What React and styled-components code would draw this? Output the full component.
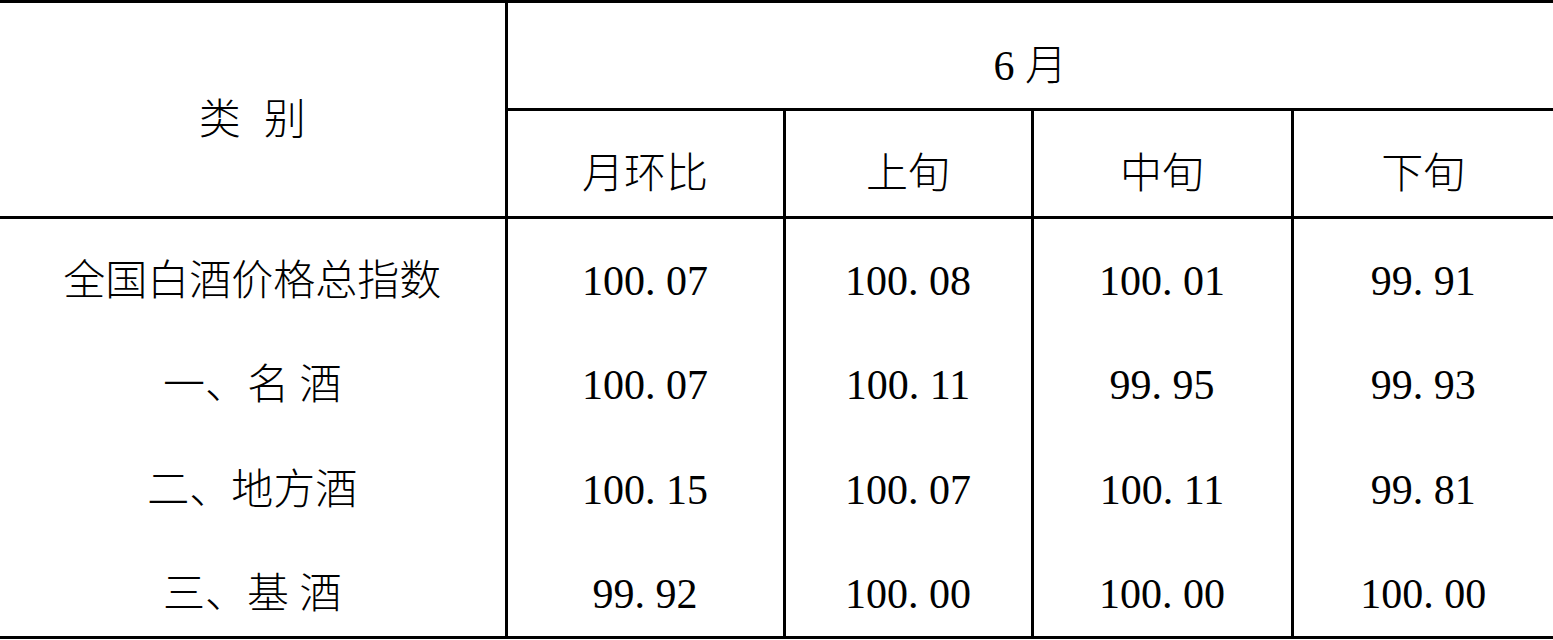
import React from "react";
import styled, { createGlobalStyle } from "styled-components";

const Global = createGlobalStyle`
  html, body { margin: 0; padding: 0; background: #ffffff; }
  body {
    font-family: "Liberation Serif", "Noto Sans CJK SC", serif;
    color: #000000;
  }
`;

const Table = styled.table`
  width: 1553px;
  table-layout: fixed;
  border-collapse: collapse;
  border-top: 3px solid #000;
  border-bottom: 3px solid #000;
  font-family: "Liberation Serif", "Noto Sans CJK SC", serif;
  font-size: 42px;
  font-weight: 300;
  color: #000;
`;

const HeadCell = styled.th`
  font-weight: 300;
  text-align: center;
  vertical-align: middle;
  height: ${(p) => p.$h || 105}px;
  padding: 20px 0 0 0;
  box-sizing: border-box;
  line-height: 1;
  border-left: ${(p) => (p.$first ? "none" : "3px solid #000")};
  border-bottom: 3px solid #000;
`;

const Cell = styled.td`
  text-align: center;
  vertical-align: middle;
  height: 105px;
  padding: 20px 0 0 0;
  box-sizing: border-box;
  line-height: 1;
  border-left: ${(p) => (p.$first ? "none" : "3px solid #000")};
`;

const Gap = styled.span`
  display: inline-block;
  width: ${(p) => p.$w}px;
`;

const Dot = styled.span`
  display: inline-block;
  width: 0.5em;
  text-align: left;
`;

const Num = ({ v }) => {
  const [a, b] = v.split(".");
  return (
    <span>
      {a}
      <Dot>.</Dot>
      {b}
    </span>
  );
};

const rows = [
  { label: "全国白酒价格总指数", vals: ["100.07", "100.08", "100.01", "99.91"] },
  { label: "一、名 酒", vals: ["100.07", "100.11", "99.95", "99.93"] },
  { label: "二、地方酒", vals: ["100.15", "100.07", "100.11", "99.81"] },
  { label: "三、基 酒", vals: ["99.92", "100.00", "100.00", "100.00"] },
];

export default function App() {
  return (
    <>
      <Global />
      <Table>
        <colgroup>
          <col style={{ width: 506 }} />
          <col style={{ width: 278 }} />
          <col style={{ width: 248 }} />
          <col style={{ width: 260 }} />
          <col style={{ width: 261 }} />
        </colgroup>
        <thead>
          <tr>
            <HeadCell $first rowSpan={2} $h={216}>
              类<Gap $w={23} />别
            </HeadCell>
            <HeadCell colSpan={4} $h={108}>
              6 月
            </HeadCell>
          </tr>
          <tr>
            <HeadCell $h={108}>月环比</HeadCell>
            <HeadCell $h={108}>上旬</HeadCell>
            <HeadCell $h={108}>中旬</HeadCell>
            <HeadCell $h={108}>下旬</HeadCell>
          </tr>
        </thead>
        <tbody>
          {rows.map((r) => (
            <tr key={r.label}>
              <Cell $first>{r.label}</Cell>
              {r.vals.map((v, i) => (
                <Cell key={i}>
                  <Num v={v} />
                </Cell>
              ))}
            </tr>
          ))}
        </tbody>
      </Table>
    </>
  );
}
